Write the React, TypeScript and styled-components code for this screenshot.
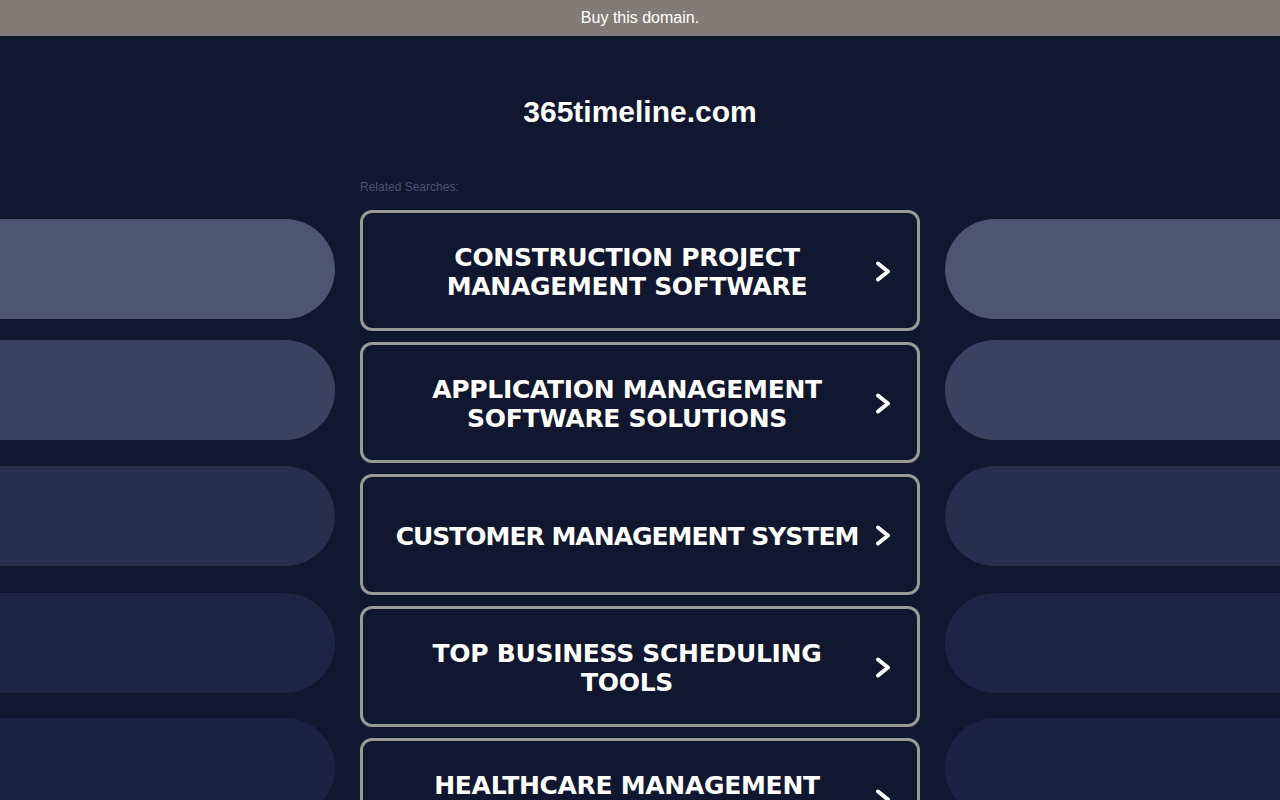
import React from 'react'
import styled, { createGlobalStyle } from 'styled-components'

// tight: a title that stays on one line, as the source font is a bit narrower
const searches = [
    { label: 'CONSTRUCTION PROJECT MANAGEMENT SOFTWARE', tight: false },
    { label: 'APPLICATION MANAGEMENT SOFTWARE SOLUTIONS', tight: false },
    { label: 'CUSTOMER MANAGEMENT SYSTEM', tight: true },
    { label: 'TOP BUSINESS SCHEDULING TOOLS', tight: false },
    { label: 'HEALTHCARE MANAGEMENT SOFTWARE', tight: false },
]

// side decoration: colour and gap above each pill
const pills = [
    { color: '#4c5672', gap: 0 },
    { color: '#3a4261', gap: 21 },
    { color: '#262f4e', gap: 26 },
    { color: '#1c2546', gap: 27 },
    { color: '#1a2343', gap: 25 },
]

const GlobalStyle = createGlobalStyle`
    html, body {
        margin: 0;
        padding: 0;
        background: #11172e;
        overflow: hidden;
    }
    body {
        font-family: "Liberation Sans", Arial, sans-serif;
    }
`

const Page = styled.div`
    height: 800px;
    overflow: hidden;
    background: #11172e;
`

const TopBar = styled.div`
    height: 36px;
    background: #817c78;
    color: #fff;
    font-size: 16px;
    display: flex;
    align-items: center;
    justify-content: center;
`

const Title = styled.h1`
    margin: 58px 0 0;
    font-size: 30px;
    line-height: 36px;
    font-weight: bold;
    color: #fff;
    text-align: center;
`

const Body = styled.div`
    display: grid;
    grid-template-columns: 1fr 560px 1fr;
    column-gap: 25px;
    margin-top: 49px;
`

const Side = styled.div`
    display: flex;
    flex-direction: column;
    padding-top: 40px;
`

const Pill = styled.div<{ $color: string; $gap: number; $side: 'left' | 'right' }>`
    height: 100px;
    flex-shrink: 0;
    margin-top: ${p => p.$gap}px;
    background: ${p => p.$color};
    border-radius: ${p => (p.$side === 'left' ? '0 50px 50px 0' : '50px 0 0 50px')};
`

const Center = styled.div`
    display: flex;
    flex-direction: column;
`

const Related = styled.div`
    font-size: 12px;
    line-height: 14px;
    padding-top: 1px;
    color: #4b5574;
    margin-bottom: 16px;
`

const List = styled.div`
    display: flex;
    flex-direction: column;
    gap: 11px;
`

const SearchLink = styled.a`
    display: flex;
    align-items: center;
    height: 121px;
    box-sizing: border-box;
    border: 3px solid #999;
    border-radius: 12px;
    padding: 3px 20px 0 24px;
    text-decoration: none;
    flex-shrink: 0;
`

const Label = styled.span<{ $tight: boolean }>`
    flex: 1;
    text-align: center;
    color: #fff;
    font-family: "DejaVu Sans", Verdana, sans-serif;
    font-weight: bold;
    font-size: 25px;
    line-height: 29px;
    letter-spacing: ${p => (p.$tight ? '-1px' : '-0.3px')};
    white-space: ${p => (p.$tight ? 'nowrap' : 'normal')};
`

const Arrow = styled.svg`
    width: 30px;
    height: 30px;
    flex-shrink: 0;
`

function Chevron() {
    return <Arrow viewBox='0 0 30 30'>
        <polyline points='11,6.5 21,14.5 11,22.5' fill='none' stroke='#fff' strokeWidth='4' strokeLinecap='round' strokeLinejoin='round' />
    </Arrow>
}

export default function App() {
    return <Page>
        <GlobalStyle />
        <TopBar>Buy this domain.</TopBar>
        <Title>365timeline.com</Title>
        <Body>
            <Side>
                {pills.map((p, i) => <Pill key={i} $color={p.color} $gap={p.gap} $side='left' />)}
            </Side>
            <Center>
                <Related>Related Searches:</Related>
                <List>
                    {searches.map(s => <SearchLink key={s.label} href='#'>
                        <Label $tight={s.tight}>{s.label}</Label>
                        <Chevron />
                    </SearchLink>)}
                </List>
            </Center>
            <Side>
                {pills.map((p, i) => <Pill key={i} $color={p.color} $gap={p.gap} $side='right' />)}
            </Side>
        </Body>
    </Page>
}
